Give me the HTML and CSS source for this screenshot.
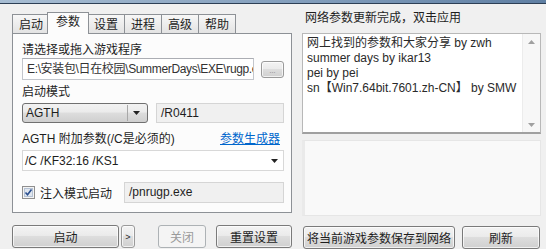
FILE: index.html
```html
<!DOCTYPE html>
<html lang="zh-CN">
  <head>
    <meta charset="UTF-8" />
    <title>参数</title>
    <link rel="stylesheet" href="styles.css">
  </head>
  <body>
    <div class="titlebar"></div>
    <div class="main">
      <!-- 左侧：选项卡 -->
      <div class="left">
        <div class="tabs">
          <div class="tab">启动</div>
          <div class="tab active">参数</div>
          <div class="tab">设置</div>
          <div class="tab">进程</div>
          <div class="tab">高级</div>
          <div class="tab">帮助</div>
        </div>
        <div class="panel">
          <div class="label">请选择或拖入游戏程序</div>
          <div class="row path-row">
            <div class="textbox path">E:\安装包\日在校园\SummerDays\EXE\rugp.exe</div>
            <button class="btn browse">...</button>
          </div>
          <div class="label mode-label">启动模式</div>
          <div class="row mode-row">
            <div class="dropdown">
              <span>AGTH</span>
              <svg width="7" height="4" viewBox="0 0 7 4"><path d="M0 0h7L3.5 4z" fill="#222"/></svg>
            </div>
            <div class="textbox readonly">/R0411</div>
          </div>
          <div class="row agth-label">
            <span>AGTH 附加参数(/C是必须的)</span>
            <a class="link" href="#">参数生成器</a>
          </div>
          <div class="textbox combo">
            <span>/C /KF32:16 /KS1</span>
            <svg width="7" height="4" viewBox="0 0 7 4"><path d="M0 0h7L3.5 4z" fill="#222"/></svg>
          </div>
          <div class="row inject-row">
            <label class="check">
              <svg width="13" height="13" viewBox="0 0 13 13">
                <rect x="0.5" y="0.5" width="12" height="12" fill="#f4f4f4" stroke="#8f8f8f"/>
                <rect x="2.5" y="2.5" width="8" height="8" fill="#dfe6ef" stroke="#b5c2d4"/>
                <path d="M3.5 6.5l2 2.2 4-5.2" fill="none" stroke="#2a4f8f" stroke-width="1.6"/>
              </svg>
              <span>注入模式启动</span>
            </label>
            <div class="textbox inject">/pnrugp.exe</div>
          </div>
        </div>
        <div class="buttons">
          <button class="btn start">启动</button>
          <button class="btn more">&gt;</button>
          <button class="btn close" disabled>关闭</button>
          <button class="btn reset">重置设置</button>
        </div>
      </div>

      <!-- 右侧：网络参数 -->
      <div class="right">
        <div class="net-label">网络参数更新完成，双击应用</div>
        <div class="listbox">
          <div class="list-items">
            <div>网上找到的参数和大家分享 by zwh</div>
            <div>summer days by ikar13</div>
            <div>pei by pei</div>
            <div>sn【Win7.64bit.7601.zh-CN】 by SMW</div>
          </div>
          <div class="scrollbar">
            <svg width="7" height="4" viewBox="0 0 7 4"><path d="M0 4h7L3.5 0z" fill="#a0a0a0"/></svg>
            <svg width="7" height="4" viewBox="0 0 7 4"><path d="M0 0h7L3.5 4z" fill="#a0a0a0"/></svg>
          </div>
        </div>
        <div class="notes"></div>
        <div class="buttons">
          <button class="btn save">将当前游戏参数保存到网络</button>
          <button class="btn refresh">刷新</button>
        </div>
      </div>
    </div>
  </body>
</html>
```

FILE: styles.css
```css
body {
  margin: 0;
  padding: 0;
  width: 546px;
  height: 249px;
  overflow: hidden;
  background-color: #f0f0f0;
  font-family: 'Liberation Sans', 'Noto Sans CJK SC', sans-serif;
  font-size: 12px;
  color: #1e1e1e;
}

.titlebar {
  height: 3px;
  background: linear-gradient(to right, #a7bdd3, #7f9bba 60%, #5f7fa3);
  border-bottom: 1px solid #2d3f55;
}

.main {
  display: flex;
  padding-left: 12px;
}

/* 左侧 */
.left {
  width: 280px;
  display: flex;
  flex-direction: column;
}

.tabs {
  display: flex;
  height: 21px;
  margin-top: 8px;
  align-items: flex-end;
  position: relative;
  z-index: 1;
}

.tab {
  width: 38px;
  height: 19px;
  line-height: 19px;
  text-align: center;
  border: 1px solid #8d9196;
  border-bottom: none;
  margin-right: -1px;
  background: linear-gradient(#f7f7f7, #e3e3e3);
  box-sizing: border-box;
  padding-top: 1px;
}

.tab.active {
  width: 42px;
  height: 22px;
  margin: 0 -2px -1px -2px;
  background-color: #fcfcfc;
  background-image: none;
  line-height: 18px;
  padding-top: 0;
  z-index: 2;
}

.panel {
  height: 180px;
  box-sizing: border-box;
  border: 1px solid #8d9196;
  background-color: #fcfcfc;
  padding: 8px 7px 0 9px;
}

.label {
  height: 16px;
  line-height: 16px;
}

.row {
  display: flex;
  align-items: center;
}

.textbox {
  height: 22px;
  box-sizing: border-box;
  border: 1px solid #c3c6cc;
  border-top-color: #abadb3;
  background-color: white;
  line-height: 20px;
  padding-left: 4px;
  white-space: nowrap;
  overflow: hidden;
}

.path {
  width: 232px;
  color: #333;
  letter-spacing: -0.35px;
}

.btn {
  font-family: 'Liberation Sans', 'Noto Sans CJK SC', sans-serif;
  font-size: 12px;
  color: #1e1e1e;
  border: 1px solid #7a7a7a;
  border-radius: 3px;
  background: linear-gradient(#f3f3f3 0%, #ebebeb 45%, #dddddd 50%, #d0d0d0 100%);
  box-shadow: inset 0 0 0 1px rgba(255, 255, 255, 0.7);
  padding: 0;
  height: 23px;
}

.browse {
  width: 23px;
  height: 17px;
  margin-left: 7px;
  font-size: 7px;
  line-height: 10px;
  padding-top: 3px;
  color: #777;
  border-color: #9a9a9a;
  overflow: hidden;
}

.mode-label {
  margin-top: 4px;
}

.mode-row {
  margin-top: 3px;
  gap: 8px;
}

.dropdown {
  width: 126px;
  height: 20px;
  box-sizing: border-box;
  display: flex;
  align-items: center;
  justify-content: space-between;
  padding: 0 7px 0 3px;
  border: 1px solid #707070;
  border-radius: 3px;
  background: linear-gradient(#f2f2f2 0%, #ebebeb 45%, #dddddd 50%, #cfcfcf 100%);
  position: relative;
}

.dropdown::after {
  content: '';
  position: absolute;
  right: 19px;
  top: 1px;
  bottom: 1px;
  border-left: 1px solid #a8a8a8;
}

.readonly {
  width: 128px;
  height: 20px;
  line-height: 18px;
  background-color: #f0f0f0;
  border-color: #d5d5d5;
}

.agth-label {
  margin-top: 6px;
  height: 16px;
  justify-content: space-between;
  padding-right: 4px;
}

.link {
  color: #0066cc;
  text-decoration: underline;
}

.combo {
  margin-top: 5px;
  height: 21px;
  display: flex;
  align-items: center;
  justify-content: space-between;
  padding: 0 5px 0 2px;
  border-color: #d8d8d8;
}

.inject-row {
  margin-top: 11px;
}

.check {
  width: 102px;
  display: flex;
  align-items: center;
  gap: 5px;
}

.inject {
  width: 160px;
  height: 21px;
  line-height: 19px;
  background-color: #f0f0f0;
  border-color: #d5d5d5;
}

.buttons {
  display: flex;
  margin-top: 12px;
}

.start {
  width: 107px;
}

.more {
  width: 14px;
  margin-left: 2px;
  font-size: 9px;
  border-color: #9a9a9a;
}

.close {
  width: 48px;
  margin-left: 23px;
  color: #9a9a9a;
  background: #f4f4f4;
  border-color: #adb2b5;
  box-shadow: none;
}

.reset {
  width: 76px;
  margin-left: 10px;
}

/* 右侧 */
.right {
  width: 239px;
  margin-left: 10px;
  display: flex;
  flex-direction: column;
}

.net-label {
  height: 29px;
  line-height: 28px;
  padding-left: 3px;
}

.listbox {
  height: 101px;
  box-sizing: border-box;
  display: flex;
  border: 1px solid #b8b8b8;
  border-bottom: 2px solid #a0a0a0;
  background-color: white;
}

.list-items {
  flex: 1;
  padding: 2px 0 0 4px;
  line-height: 15px;
  color: #2a2a2a;
}

.scrollbar {
  width: 17px;
  display: flex;
  flex-direction: column;
  align-items: center;
  justify-content: space-between;
  padding: 6px 0 5px;
  border-left: 1px solid #ececec;
  background-color: #f7f7f7;
}

.notes {
  height: 76px;
  margin-top: 6px;
  box-sizing: border-box;
  border: 1px solid #e6e6e6;
  border-left: 3px solid #eaeaea;
  background-color: #f9f9f9;
}

.right .buttons {
  margin-top: 10px;
}

.save {
  width: 152px;
  margin-left: 1px;
}

.refresh {
  width: 78px;
  margin-left: 7px;
}
```
